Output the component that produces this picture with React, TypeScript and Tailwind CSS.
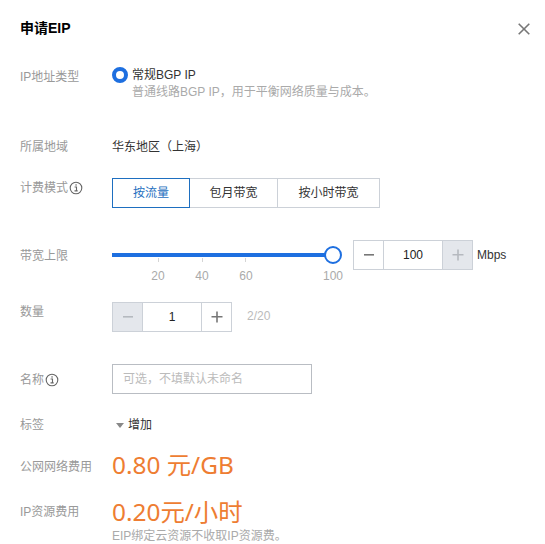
import React from 'react';

const font = { fontFamily: '"Liberation Sans", "Noto Sans CJK SC", sans-serif' };
const priceFont = { fontFamily: '"Noto Sans", "Noto Sans CJK SC", sans-serif' };

function InfoIcon() {
  return (
    <svg width="14" height="14" viewBox="0 0 14 14" fill="none" className="shrink-0">
      <circle cx="7" cy="7" r="5.8" stroke="#666" strokeWidth="1.1" />
      <rect x="6.4" y="3.3" width="1.3" height="1.3" fill="#666" />
      <path d="M5.6 6h1.9v3.6M5.5 9.9h3.2" stroke="#666" strokeWidth="1.1" />
    </svg>
  );
}

function Stepper({ value, minusOff, plusOff }: { value: string; minusOff?: boolean; plusOff?: boolean }) {
  const btn = 'w-[30px] h-full flex items-center justify-center';
  return (
    <div className="flex h-[30px] w-[120px] border border-[#ccd1d8] shrink-0">
      <div className={`${btn} border-r border-[#ccd1d8] ${minusOff ? 'bg-[#e4e7ec]' : ''}`}>
        <svg width="12" height="12" viewBox="0 0 12 12">
          <rect x="1" y="5" width="10" height="1.6" fill={minusOff ? '#b5b9bf' : '#777'} />
        </svg>
      </div>
      <div className="flex-1 flex items-center justify-center text-[12px] text-[#222]">{value}</div>
      <div className={`${btn} border-l border-[#ccd1d8] ${plusOff ? 'bg-[#e4e7ec]' : ''}`}>
        <svg width="12" height="12" viewBox="0 0 12 12">
          <path d="M0.5 5.8h11M6 0.5v11" stroke={plusOff ? '#b5b9bf' : '#777'} strokeWidth="1.6" />
        </svg>
      </div>
    </div>
  );
}

function Label({ children, info }: { children: React.ReactNode; info?: boolean }) {
  return (
    <div className="w-[92px] shrink-0 self-start flex items-center gap-[1px] text-[12px] leading-[18px] text-[#999]">
      {children}
      {info && <InfoIcon />}
    </div>
  );
}

export default function App() {
  return (
    <div className="w-[545px] h-[544px] bg-white overflow-hidden pl-5 pt-[18px]" style={font}>
      <div className="flex items-start justify-between pr-[15px]">
        <div className="text-[14px] leading-[20px] font-bold text-black">申请EIP</div>
        <svg width="12" height="12" viewBox="0 0 12 12" className="mt-[5px]">
          <path d="M0.7 0.7l10.6 10.6M11.3 0.7L0.7 11.3" stroke="#777" strokeWidth="1.6" />
        </svg>
      </div>

      <div className="flex mt-[29px]">
        <div className="pt-[1px]">
          <Label>IP地址类型</Label>
        </div>
        <div className="flex gap-[4px]">
          <div className="w-4 h-4 rounded-full border-[4px] border-[#1e6fe0] bg-white shrink-0" />
          <div className="text-[12px] leading-[17px]">
            <div className="text-[#333]">常规BGP IP</div>
            <div className="text-[#aaa]">普通线路BGP IP，用于平衡网络质量与成本。</div>
          </div>
        </div>
      </div>

      <div className="flex mt-[36px] pt-[1px]">
        <Label>所属地域</Label>
        <div className="text-[12px] leading-[18px] text-[#333]">华东地区（上海）</div>
      </div>

      <div className="flex mt-[22px]">
        <div className="pt-[1px]">
          <Label info>计费模式</Label>
        </div>
        <div className="flex h-[30px] text-[12px] text-[#333]">
          <div className="w-[78px] flex items-center justify-center border border-[#1e6fc0] text-[#1e6fc0]">按流量</div>
          <div className="w-[88px] flex items-center justify-center border-y border-r border-[#ccd1d8]">包月带宽</div>
          <div className="w-[102px] flex items-center justify-center border-y border-r border-[#ccd1d8]">按小时带宽</div>
        </div>
      </div>

      <div className="flex mt-[32px]">
        <div className="pt-[7px]">
          <Label>带宽上限</Label>
        </div>
        <div className="w-[231px] mr-[10px] shrink-0">
          <div className="relative h-[30px] flex items-center">
            <div className="h-1 w-[225px] bg-[#1e6fe0]" />
            <div className="absolute right-[1px] top-[6px] w-[18px] h-[18px] rounded-full bg-white border-2 border-[#1e6fe0]" />
          </div>
          <div className="flex h-[4px] mt-[-12px] mb-[7px]">
            <div className="ml-[46px] w-px bg-[#d5d5d5]" />
            <div className="ml-[43px] w-px bg-[#d5d5d5]" />
            <div className="ml-[42px] w-px bg-[#d5d5d5]" />
          </div>
          <div className="flex text-[12px] leading-[14px] text-[#aaa]">
            <div className="ml-[38px] w-4 text-center">20</div>
            <div className="ml-[28px] w-4 text-center">40</div>
            <div className="ml-[28px] w-4 text-center">60</div>
            <div className="ml-auto text-right">100</div>
          </div>
        </div>
        <Stepper value="100" plusOff />
        <div className="text-[12px] leading-[30px] text-[#333] ml-[4px]">Mbps</div>
      </div>

      <div className="flex mt-[19px]">
        <div className="pt-[1px]">
          <Label>数量</Label>
        </div>
        <Stepper value="1" minusOff />
        <div className="text-[12px] leading-[28px] text-[#bbb] ml-[15px]">2/20</div>
      </div>

      <div className="flex mt-[32px]">
        <div className="pt-[7px]">
          <Label info>名称</Label>
        </div>
        <div className="w-[200px] h-[30px] border border-[#b9bdc3] px-[10px] flex items-center text-[12px] text-[#bbb]">
          可选，不填默认未命名
        </div>
      </div>

      <div className="flex mt-[21px] pt-[1px]">
        <Label>标签</Label>
        <div className="flex items-center gap-[4px] text-[12px] leading-[18px] text-[#333]">
          <div className="ml-[4px] w-0 h-0 border-x-[4px] border-x-transparent border-t-[5px] border-t-[#888]" />
          增加
        </div>
      </div>

      <div className="flex mt-[16px]">
        <div className="pt-[8px]">
          <Label>公网网络费用</Label>
        </div>
        <div className="text-[24.4px] leading-[30px] text-[#ee7d32]" style={priceFont}>
          0.80 元/GB
        </div>
      </div>

      <div className="flex mt-[17px]">
        <div className="pt-[6px]">
          <Label>IP资源费用</Label>
        </div>
        <div>
          <div className="text-[24.4px] leading-[30px] text-[#ee7d32]" style={priceFont}>
            0.20元/小时
          </div>
          <div className="pt-[2px] text-[12px] leading-[14px] text-[#aaa]">EIP绑定云资源不收取IP资源费。</div>
        </div>
      </div>
    </div>
  );
}
